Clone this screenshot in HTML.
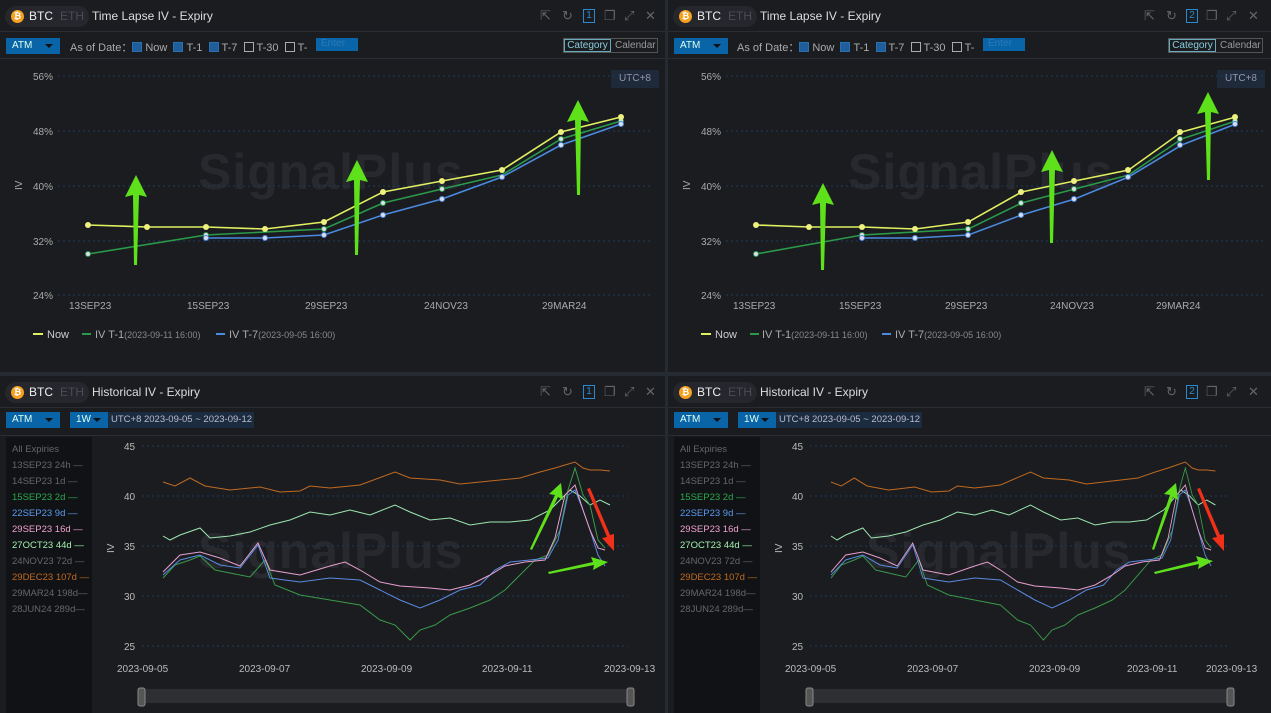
<!DOCTYPE html><html><head><meta charset="utf-8"><style>
*{box-sizing:border-box;margin:0;padding:0}
body{width:1271px;height:713px;background:#262a33;font-family:"Liberation Sans",sans-serif;overflow:hidden;position:relative;color:#ccc}
.p{position:absolute;background:#1b1c20;overflow:hidden}
.hd{position:absolute;left:0;top:0;right:0;height:32px;border-bottom:1px solid #2a2d33}
.pill{position:absolute;left:5px;top:6px;width:84px;height:21px;border-radius:11px;background:#25272d}
.coin{position:absolute;left:6px;top:4px;width:13px;height:13px;border-radius:50%;background:#f4a020;color:#fff;font-size:9px;text-align:center;line-height:13px;font-weight:bold}
.btc{position:absolute;left:24px;top:3px;font-size:12px;color:#eee}
.eth{position:absolute;left:55px;top:3px;font-size:12px;color:#4a4d55}
.tt{position:absolute;left:92px;top:9px;font-size:12px;color:#ddd}
.ic{position:absolute;top:9px;font-size:13px;color:#666;line-height:14px}
.num{position:absolute;top:9px;width:12px;height:14px;border:1px solid #2a8ad0;color:#2a8ad0;font-size:10px;text-align:center;line-height:12px}
.tb{position:absolute;left:0;right:0;top:33px;height:26px;border-bottom:1px solid #2a2d33}
.sel{position:absolute;background:#0a65a8;color:#dfe;font-size:10px;height:16px;line-height:16px;padding-left:6px}
.sel:after{content:"";position:absolute;right:7px;top:6px;border:4px solid transparent;border-top:4px solid #111}
.t{position:absolute;font-size:11px;color:#aaa;white-space:nowrap}
.cb{display:inline-block;width:10px;height:10px;vertical-align:-1px;margin-right:3px;border:1px solid #aaa}
.cb.on{background:#1f5e9a;border-color:#2a6fb0}
.wm{position:absolute;font-size:50px;font-weight:bold;color:#27292e;letter-spacing:1px}
.rng{position:absolute;left:108px;top:3px;width:146px;height:16px;background:#1c2c40;color:#bbc;font-size:9.5px;line-height:16px;padding-left:3px;white-space:nowrap;overflow:hidden}
svg{position:absolute;left:0;top:0}
</style></head><body>

<!-- TOP LEFT -->
<div class="p" style="left:0;top:0;width:665px;height:372px">
<div class="hd"><div class="pill"><div class="coin">₿</div><div class="btc">BTC</div><div class="eth">ETH</div></div><div class="tt">Time Lapse IV - Expiry</div>
<div class="ic" style="left:540px">⇱</div><div class="ic" style="left:562px">↻</div><div class="num" style="left:583px">1</div><div class="ic" style="left:604px">❐</div><div class="ic" style="left:624px">⤢</div><div class="ic" style="left:645px">✕</div></div>
<div class="tb"><div class="sel" style="left:6px;top:5px;width:54px">ATM</div>
<div class="t" style="left:70px;top:6px">As of Date：<span class="cb on"></span>Now &nbsp;<span class="cb on"></span>T-1 &nbsp;<span class="cb on"></span>T-7 &nbsp;<span class="cb"></span>T-30 &nbsp;<span class="cb"></span>T-</div>
<div style="position:absolute;left:316px;top:5px;width:42px;height:13px;background:#0a65a8;color:#2a7ab8;font-size:10px;padding-left:5px">Enter</div>
<div style="position:absolute;left:563px;top:5px;width:95px;height:15px;border:1px solid #555;font-size:10px;color:#999"><span style="position:absolute;left:0;top:0;width:47px;height:13px;border:1px solid #6ab;color:#8cd;text-align:center;line-height:11px">Category</span><span style="position:absolute;left:51px;top:1px">Calendar</span></div></div>
<div class="wm" style="left:198px;top:143px">SignalPlus</div>
<div style="position:absolute;left:611px;top:70px;width:48px;height:18px;background:#1e2a3a;color:#99a;font-size:10px;text-align:center;line-height:18px">UTC+8</div>
<svg width="665" height="372">
<g stroke="#1e3a5a" stroke-dasharray="2 3"><line x1="58" y1="76" x2="650" y2="76"/><line x1="58" y1="131" x2="650" y2="131"/><line x1="58" y1="186" x2="650" y2="186"/><line x1="58" y1="241" x2="650" y2="241"/><line x1="58" y1="295" x2="650" y2="295"/></g>
<g fill="#aaa" font-size="10" font-family="Liberation Sans"><text x="33" y="80">56%</text><text x="33" y="135">48%</text><text x="33" y="190">40%</text><text x="33" y="245">32%</text><text x="33" y="299">24%</text>
<text x="69" y="309">13SEP23</text><text x="187" y="309">15SEP23</text><text x="305" y="309">29SEP23</text><text x="424" y="309">24NOV23</text><text x="542" y="309">29MAR24</text>
<text x="14" y="190" transform="rotate(-90 18 186)">IV</text>
<text x="47" y="338" fill="#ccc" font-size="11">Now</text><text x="95" y="338" font-size="11">IV T-1<tspan font-size="9" fill="#888">(2023-09-11 16:00)</tspan></text><text x="229" y="338" font-size="11">IV T-7<tspan font-size="9" fill="#888">(2023-09-05 16:00)</tspan></text></g>
<g stroke-width="2"><line x1="33" y1="334" x2="43" y2="334" stroke="#e0f060"/><line x1="82" y1="334" x2="91" y2="334" stroke="#2a9a4a"/><line x1="216" y1="334" x2="225" y2="334" stroke="#4a8ae0"/></g>
<g fill="none" stroke-width="1.6"><polyline stroke="#2a9a4a" points="88,254 206,235 324,229 383,203 442,189 502,175 561,139 621,121"/><polyline stroke="#4a8ae0" points="206,238 265,238 324,235 383,215 442,199 502,177 561,145 621,124"/><polyline stroke="#e0f060" points="88,225 147,227 206,227 265,229 324,222 383,192 442,181 502,170 561,132 621,117"/></g>
<g fill="#dde" stroke-width="1"><g stroke="#2a9a4a"><circle cx="88" cy="254" r="2.5"/><circle cx="206" cy="235" r="2.5"/><circle cx="324" cy="229" r="2.5"/><circle cx="383" cy="203" r="2.5"/><circle cx="442" cy="189" r="2.5"/><circle cx="561" cy="139" r="2.5"/><circle cx="621" cy="121" r="2.5"/></g><g stroke="#4a8ae0"><circle cx="206" cy="238" r="2.5"/><circle cx="265" cy="238" r="2.5"/><circle cx="324" cy="235" r="2.5"/><circle cx="383" cy="215" r="2.5"/><circle cx="442" cy="199" r="2.5"/><circle cx="502" cy="177" r="2.5"/><circle cx="561" cy="145" r="2.5"/><circle cx="621" cy="124" r="2.5"/></g><g fill="#eef080" stroke="none"><circle cx="88" cy="225" r="3"/><circle cx="147" cy="227" r="3"/><circle cx="206" cy="227" r="3"/><circle cx="265" cy="229" r="3"/><circle cx="324" cy="222" r="3"/><circle cx="383" cy="192" r="3"/><circle cx="442" cy="181" r="3"/><circle cx="502" cy="170" r="3"/><circle cx="561" cy="132" r="3"/><circle cx="621" cy="117" r="3"/></g></g>
<g fill="#5ee01a"><path d="M136,175 L147,197 L139,195 L137,265 L134,265 L133,195 L125,197Z"/><path d="M357,160 L368,182 L360,180 L358,255 L355,255 L354,180 L346,182Z"/><path d="M578,100 L589,122 L581,120 L580,195 L577,195 L575,120 L567,122Z"/></g>
</svg></div>

<!-- TOP RIGHT -->
<div class="p" style="left:668px;top:0;width:603px;height:372px">
<div class="hd"><div class="pill"><div class="coin">₿</div><div class="btc">BTC</div><div class="eth">ETH</div></div><div class="tt">Time Lapse IV - Expiry</div>
<div class="ic" style="left:476px">⇱</div><div class="ic" style="left:498px">↻</div><div class="num" style="left:518px">2</div><div class="ic" style="left:538px">❐</div><div class="ic" style="left:558px">⤢</div><div class="ic" style="left:580px">✕</div></div>
<div class="tb"><div class="sel" style="left:6px;top:5px;width:54px">ATM</div>
<div class="t" style="left:69px;top:6px">As of Date：<span class="cb on"></span>Now &nbsp;<span class="cb on"></span>T-1 &nbsp;<span class="cb on"></span>T-7 &nbsp;<span class="cb"></span>T-30 &nbsp;<span class="cb"></span>T-</div>
<div style="position:absolute;left:315px;top:5px;width:42px;height:13px;background:#0a65a8;color:#2a7ab8;font-size:10px;padding-left:5px">Enter</div>
<div style="position:absolute;left:500px;top:5px;width:95px;height:15px;border:1px solid #555;font-size:10px;color:#999"><span style="position:absolute;left:0;top:0;width:47px;height:13px;border:1px solid #6ab;color:#8cd;text-align:center;line-height:11px">Category</span><span style="position:absolute;left:51px;top:1px">Calendar</span></div></div>
<div class="wm" style="left:180px;top:143px">SignalPlus</div>
<div style="position:absolute;left:549px;top:70px;width:48px;height:18px;background:#1e2a3a;color:#99a;font-size:10px;text-align:center;line-height:18px">UTC+8</div>
<svg width="603" height="372">
<g stroke="#1e3a5a" stroke-dasharray="2 3"><line x1="58" y1="76" x2="595" y2="76"/><line x1="58" y1="131" x2="595" y2="131"/><line x1="58" y1="186" x2="595" y2="186"/><line x1="58" y1="241" x2="595" y2="241"/><line x1="58" y1="295" x2="595" y2="295"/></g>
<g transform="translate(88,0) scale(0.9,1) translate(-88,0)">
<g fill="none" stroke-width="1.6"><polyline stroke="#2a9a4a" points="88,254 206,235 324,229 383,203 442,189 502,175 561,139 621,121"/><polyline stroke="#4a8ae0" points="206,238 265,238 324,235 383,215 442,199 502,177 561,145 621,124"/><polyline stroke="#e0f060" points="88,225 147,227 206,227 265,229 324,222 383,192 442,181 502,170 561,132 621,117"/></g>
</g>
<g fill="#dde" stroke-width="1"><g stroke="#2a9a4a"><circle cx="88" cy="254" r="2.5"/><circle cx="194" cy="235" r="2.5"/><circle cx="300" cy="229" r="2.5"/><circle cx="353" cy="203" r="2.5"/><circle cx="406" cy="189" r="2.5"/><circle cx="512" cy="139" r="2.5"/><circle cx="567" cy="121" r="2.5"/></g><g stroke="#4a8ae0"><circle cx="194" cy="238" r="2.5"/><circle cx="247" cy="238" r="2.5"/><circle cx="300" cy="235" r="2.5"/><circle cx="353" cy="215" r="2.5"/><circle cx="406" cy="199" r="2.5"/><circle cx="460" cy="177" r="2.5"/><circle cx="512" cy="145" r="2.5"/><circle cx="567" cy="124" r="2.5"/></g><g fill="#eef080" stroke="none"><circle cx="88" cy="225" r="3"/><circle cx="141" cy="227" r="3"/><circle cx="194" cy="227" r="3"/><circle cx="247" cy="229" r="3"/><circle cx="300" cy="222" r="3"/><circle cx="353" cy="192" r="3"/><circle cx="406" cy="181" r="3"/><circle cx="460" cy="170" r="3"/><circle cx="512" cy="132" r="3"/><circle cx="567" cy="117" r="3"/></g></g>
<g fill="#5ee01a"><path d="M155,183 L166,205 L158,203 L156,270 L153,270 L152,203 L144,205Z"/><path d="M384,150 L395,172 L387,170 L385,243 L382,243 L381,170 L373,172Z"/><path d="M540,92 L551,114 L543,112 L542,180 L539,180 L537,112 L529,114Z"/></g>
<g fill="#aaa" font-size="10" font-family="Liberation Sans"><text x="33" y="80">56%</text><text x="33" y="135">48%</text><text x="33" y="190">40%</text><text x="33" y="245">32%</text><text x="33" y="299">24%</text>
<text x="65" y="309">13SEP23</text><text x="171" y="309">15SEP23</text><text x="277" y="309">29SEP23</text><text x="382" y="309">24NOV23</text><text x="488" y="309">29MAR24</text>
<text x="14" y="190" transform="rotate(-90 18 186)">IV</text>
<text x="47" y="338" fill="#ccc" font-size="11">Now</text><text x="94" y="338" font-size="11">IV T-1<tspan font-size="9" fill="#888">(2023-09-11 16:00)</tspan></text><text x="227" y="338" font-size="11">IV T-7<tspan font-size="9" fill="#888">(2023-09-05 16:00)</tspan></text></g>
<g stroke-width="2"><line x1="33" y1="334" x2="43" y2="334" stroke="#e0f060"/><line x1="82" y1="334" x2="91" y2="334" stroke="#2a9a4a"/><line x1="214" y1="334" x2="223" y2="334" stroke="#4a8ae0"/></g>
</svg></div>

<!-- BOTTOM LEFT -->
<div class="p" style="left:0;top:376px;width:665px;height:337px">
<div class="hd" style="height:32px"><div class="pill"><div class="coin">₿</div><div class="btc">BTC</div><div class="eth">ETH</div></div><div class="tt">Historical IV - Expiry</div>
<div class="ic" style="left:540px">⇱</div><div class="ic" style="left:562px">↻</div><div class="num" style="left:583px">1</div><div class="ic" style="left:604px">❐</div><div class="ic" style="left:624px">⤢</div><div class="ic" style="left:645px">✕</div></div>
<div class="tb" style="top:33px;height:27px"><div class="sel" style="left:6px;top:3px;width:54px">ATM</div><div class="sel" style="left:70px;top:3px;width:38px">1W</div>
<div class="rng">UTC+8 2023-09-05 ~ 2023-09-12</div></div>
<div style="position:absolute;left:6px;top:61px;width:86px;height:280px;background:#111215;font-size:9.5px;line-height:16px;padding:5px 0 0 6px;color:#666;white-space:nowrap">
<div>All Expiries</div><div>13SEP23 24h —</div><div>14SEP23 1d —</div><div style="color:#2aaa4a">15SEP23 2d —</div><div style="color:#5a9aef">22SEP23 9d —</div><div style="color:#f0a0d0">29SEP23 16d —</div><div style="color:#a0f0b0">27OCT23 44d —</div><div>24NOV23 72d —</div><div style="color:#c06a20">29DEC23 107d —</div><div>29MAR24 198d—</div><div>28JUN24 289d—</div></div>
<div class="wm" style="left:198px;top:146px">SignalPlus</div>
<svg width="665" height="337"><g transform="translate(0,-376)">
<g stroke="#1e3a5a" stroke-dasharray="2 3"><line x1="142" y1="446" x2="628" y2="446"/><line x1="142" y1="496" x2="628" y2="496"/><line x1="142" y1="546" x2="628" y2="546"/><line x1="142" y1="596" x2="628" y2="596"/><line x1="142" y1="646" x2="628" y2="646"/></g>
<g fill="#bbb" font-size="10" font-family="Liberation Sans"><text x="124" y="450">45</text><text x="124" y="500">40</text><text x="124" y="550">35</text><text x="124" y="600">30</text><text x="124" y="650">25</text>
<text x="117" y="672">2023-09-05</text><text x="239" y="672">2023-09-07</text><text x="361" y="672">2023-09-09</text><text x="482" y="672">2023-09-11</text><text x="604" y="672">2023-09-13</text>
<text x="106" y="553" transform="rotate(-90 110 549)">IV</text></g>
<g fill="none" stroke-width="1"><polyline stroke="#c06a20" points="163,482 175,486 190,478 205,486 230,490 260,487 280,492 300,491 310,486 330,488 360,485 395,472 410,478 440,480 460,484 480,482 500,480 520,478 540,472 555,468 565,465 575,462 583,468 590,470 600,470 610,471"/>
<polyline stroke="#9ee8b0" points="163,536 170,540 180,535 200,528 210,538 230,536 250,532 270,525 290,520 310,512 330,515 350,510 370,515 395,505 410,512 430,520 450,518 470,525 490,522 510,522 530,520 550,510 560,500 570,490 580,496 590,505 600,500 610,505"/>
<polyline stroke="#3a9a4a" points="163,578 175,565 190,560 200,556 215,570 230,573 250,577 265,560 275,585 300,595 330,600 360,605 380,620 395,625 410,640 420,630 435,625 450,615 470,608 490,600 505,590 520,575 535,560 548,555 560,530 568,490 575,468 583,495 590,505 598,540 605,548"/>
<polyline stroke="#5a8ae0" points="163,575 180,560 200,555 220,565 240,568 258,545 270,578 300,582 330,578 360,580 380,590 400,600 420,608 440,600 460,590 480,585 495,570 510,562 530,560 548,558 558,540 568,495 575,490 583,510 590,530 598,555 605,566"/>
<polyline stroke="#e8a0d0" points="163,572 180,555 200,552 220,558 240,566 258,543 270,570 300,575 330,566 345,562 360,570 380,582 400,586 430,588 450,590 470,585 490,575 505,566 525,562 545,560 555,538 565,495 575,485 583,510 590,530 598,548 605,550"/></g>
<g fill="#5ee01a"><path d="M561,483 L563,500 L558,497 L532,550 L530,549 L555,495 L549,494Z"/><path d="M608,562 L593,570 L594,565 L549,574 L548,572 L593,562 L591,557Z"/></g>
<path fill="#f03018" d="M614,551 L602,538 L607,537 L587,489 L590,488 L610,535 L614,534Z"/>
<rect x="140" y="689" width="490" height="14" fill="#2e2f33"/><rect x="138" y="688" width="7" height="18" rx="2" fill="#555" stroke="#888"/><rect x="627" y="688" width="7" height="18" rx="2" fill="#555" stroke="#888"/>
</g></svg></div>

<!-- BOTTOM RIGHT -->
<div class="p" style="left:668px;top:376px;width:603px;height:337px">
<div class="hd" style="height:32px"><div class="pill"><div class="coin">₿</div><div class="btc">BTC</div><div class="eth">ETH</div></div><div class="tt">Historical IV - Expiry</div>
<div class="ic" style="left:476px">⇱</div><div class="ic" style="left:498px">↻</div><div class="num" style="left:518px">2</div><div class="ic" style="left:538px">❐</div><div class="ic" style="left:558px">⤢</div><div class="ic" style="left:580px">✕</div></div>
<div class="tb" style="top:33px;height:27px"><div class="sel" style="left:6px;top:3px;width:54px">ATM</div><div class="sel" style="left:70px;top:3px;width:38px">1W</div>
<div class="rng">UTC+8 2023-09-05 ~ 2023-09-12</div></div>
<div style="position:absolute;left:6px;top:61px;width:86px;height:280px;background:#111215;font-size:9.5px;line-height:16px;padding:5px 0 0 6px;color:#666;white-space:nowrap">
<div>All Expiries</div><div>13SEP23 24h —</div><div>14SEP23 1d —</div><div style="color:#2aaa4a">15SEP23 2d —</div><div style="color:#5a9aef">22SEP23 9d —</div><div style="color:#f0a0d0">29SEP23 16d —</div><div style="color:#a0f0b0">27OCT23 44d —</div><div>24NOV23 72d —</div><div style="color:#c06a20">29DEC23 107d —</div><div>29MAR24 198d—</div><div>28JUN24 289d—</div></div>
<div class="wm" style="left:198px;top:146px">SignalPlus</div>
<svg width="603" height="337"><g transform="translate(0,-376)">
<g stroke="#1e3a5a" stroke-dasharray="2 3"><line x1="142" y1="446" x2="562" y2="446"/><line x1="142" y1="496" x2="562" y2="496"/><line x1="142" y1="546" x2="562" y2="546"/><line x1="142" y1="596" x2="562" y2="596"/><line x1="142" y1="646" x2="562" y2="646"/></g>
<g fill="#bbb" font-size="10" font-family="Liberation Sans"><text x="124" y="450">45</text><text x="124" y="500">40</text><text x="124" y="550">35</text><text x="124" y="600">30</text><text x="124" y="650">25</text>
<text x="117" y="672">2023-09-05</text><text x="239" y="672">2023-09-07</text><text x="361" y="672">2023-09-09</text><text x="459" y="672">2023-09-11</text><text x="538" y="672">2023-09-13</text>
<text x="106" y="553" transform="rotate(-90 110 549)">IV</text></g>
<g transform="translate(163,0) scale(0.86,1) translate(-163,0)"><g fill="none" stroke-width="1"><polyline stroke="#c06a20" points="163,482 175,486 190,478 205,486 230,490 260,487 280,492 300,491 310,486 330,488 360,485 395,472 410,478 440,480 460,484 480,482 500,480 520,478 540,472 555,468 565,465 575,462 583,468 590,470 600,470 610,471"/>
<polyline stroke="#9ee8b0" points="163,536 170,540 180,535 200,528 210,538 230,536 250,532 270,525 290,520 310,512 330,515 350,510 370,515 395,505 410,512 430,520 450,518 470,525 490,522 510,522 530,520 550,510 560,500 570,490 580,496 590,505 600,500 610,505"/>
<polyline stroke="#3a9a4a" points="163,578 175,565 190,560 200,556 215,570 230,573 250,577 265,560 275,585 300,595 330,600 360,605 380,620 395,625 410,640 420,630 435,625 450,615 470,608 490,600 505,590 520,575 535,560 548,555 560,530 568,490 575,468 583,495 590,505 598,540 605,548"/>
<polyline stroke="#5a8ae0" points="163,575 180,560 200,555 220,565 240,568 258,545 270,578 300,582 330,578 360,580 380,590 400,600 420,608 440,600 460,590 480,585 495,570 510,562 530,560 548,558 558,540 568,495 575,490 583,510 590,530 598,555 605,566"/>
<polyline stroke="#e8a0d0" points="163,572 180,555 200,552 220,558 240,566 258,543 270,570 300,575 330,566 345,562 360,570 380,582 400,586 430,588 450,590 470,585 490,575 505,566 525,562 545,560 555,538 565,495 575,485 583,510 590,530 598,548 605,550"/></g></g>
<g fill="#5ee01a"><path d="M508,483 L510,500 L505,497 L486,550 L484,549 L502,495 L496,494Z"/><path d="M545,561 L530,569 L531,564 L487,574 L486,572 L530,561 L528,556Z"/></g>
<path fill="#f03018" d="M556,551 L544,538 L549,537 L529,489 L532,488 L552,535 L556,534Z"/>
<rect x="140" y="689" width="422" height="14" fill="#2e2f33"/><rect x="138" y="688" width="7" height="18" rx="2" fill="#555" stroke="#888"/><rect x="559" y="688" width="7" height="18" rx="2" fill="#555" stroke="#888"/>
</g></svg></div>
</body></html>
